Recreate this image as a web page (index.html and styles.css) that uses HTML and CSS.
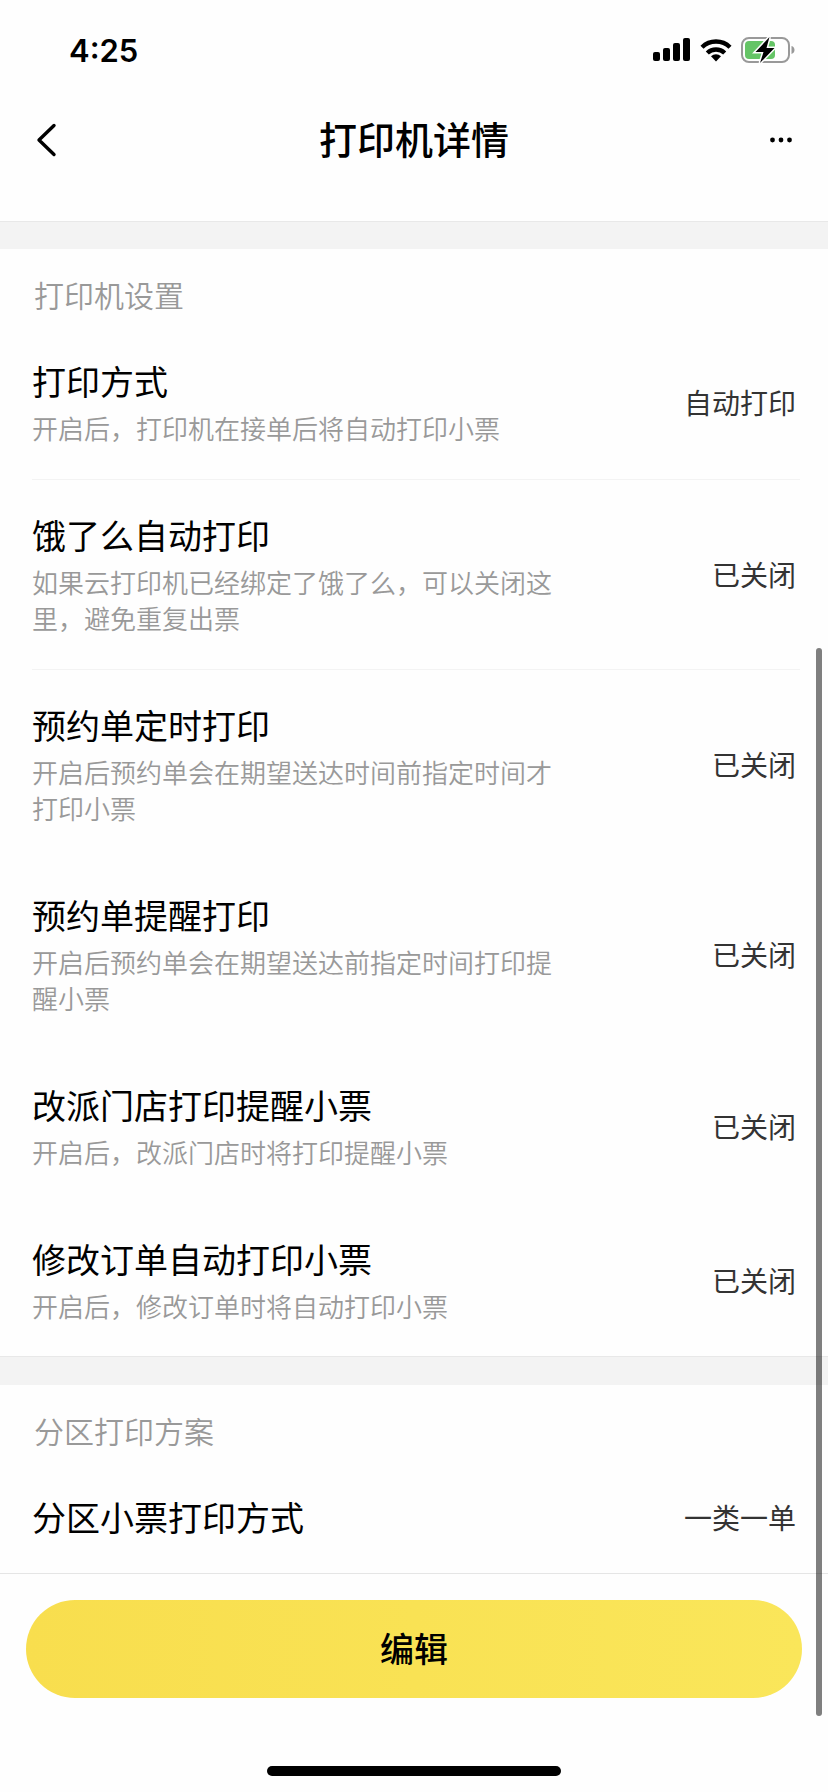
FILE: index.html
```html
<!DOCTYPE html>
<html lang="zh-CN">
<head>
  <meta charset="UTF-8">
  <meta name="viewport" content="width=device-width, initial-scale=1.0">
  <title>打印机详情</title>
  <link rel="stylesheet" href="styles.css">
</head>
<body>
  <div class="page">
    <div class="status-bar">
      <span class="time">4:25</span>
      <div class="status-icons">
        <svg width="38" height="24" viewBox="0 0 38 24" aria-hidden="true">
          <rect x="0" y="14" width="7" height="9" rx="2"/>
          <rect x="10" y="10" width="7" height="13" rx="2"/>
          <rect x="20" y="5" width="7" height="18" rx="2"/>
          <rect x="30" y="0" width="7" height="23" rx="2"/>
        </svg>
        <svg width="32" height="24" viewBox="0 0 32 24" aria-hidden="true">
          <g fill="none" stroke="#000" stroke-width="4.4">
            <path d="M2 9.2a20 20 0 0 1 28 0"/>
            <path d="M7.3 15a12.5 12.5 0 0 1 17.4 0"/>
          </g>
          <path d="M16 23.4l-5-5.2a7.2 7.2 0 0 1 10 0z"/>
        </svg>
        <svg width="54" height="28" viewBox="0 0 54 28" aria-hidden="true">
          <rect x="1" y="2" width="47" height="24" rx="7" fill="none" stroke="#999" stroke-width="2"/>
          <path d="M50.5 10v8c2-.6 3-2.2 3-4s-1-3.4-3-4z" fill="#999"/>
          <rect x="4" y="5" width="30" height="18" rx="4" fill="#65c466"/>
          <path d="M28.5 1L14.5 16h8l-3.5 11L33.500 12h-8z" stroke="#fefefe" stroke-width="3" paint-order="stroke"/>
        </svg>
      </div>
    </div>

    <header class="nav">
      <button class="nav-btn" aria-label="返回">
        <svg width="22" height="34" viewBox="0 0 22 34" aria-hidden="true">
          <path d="M18 2.5L3 17l15 14.5" fill="none" stroke="#000" stroke-width="3.4" stroke-linecap="round" stroke-linejoin="round"/>
        </svg>
      </button>
      <h1>打印机详情</h1>
      <button class="nav-btn more" aria-label="更多">
        <svg width="22" height="6" viewBox="0 0 22 6" aria-hidden="true">
          <circle cx="2.5" cy="3" r="2.4"/>
          <circle cx="11" cy="3" r="2.4"/>
          <circle cx="19.5" cy="3" r="2.4"/>
        </svg>
      </button>
    </header>

    <main>
      <section class="group">
        <h2>打印机设置</h2>
        <div class="row line">
          <div class="info">
            <h3>打印方式</h3>
            <p>开启后，打印机在接单后将自动打印小票</p>
          </div>
          <span class="value">自动打印</span>
        </div>
        <div class="row line">
          <div class="info">
            <h3>饿了么自动打印</h3>
            <p>如果云打印机已经绑定了饿了么，可以关闭这里，避免重复出票</p>
          </div>
          <span class="value">已关闭</span>
        </div>
        <div class="row">
          <div class="info">
            <h3>预约单定时打印</h3>
            <p>开启后预约单会在期望送达时间前指定时间才打印小票</p>
          </div>
          <span class="value">已关闭</span>
        </div>
        <div class="row">
          <div class="info">
            <h3>预约单提醒打印</h3>
            <p>开启后预约单会在期望送达前指定时间打印提醒小票</p>
          </div>
          <span class="value">已关闭</span>
        </div>
        <div class="row">
          <div class="info">
            <h3>改派门店打印提醒小票</h3>
            <p>开启后，改派门店时将打印提醒小票</p>
          </div>
          <span class="value">已关闭</span>
        </div>
        <div class="row">
          <div class="info">
            <h3>修改订单自动打印小票</h3>
            <p>开启后，修改订单时将自动打印小票</p>
          </div>
          <span class="value">已关闭</span>
        </div>
      </section>

      <section class="group">
        <h2>分区打印方案</h2>
        <div class="row">
          <div class="info">
            <h3>分区小票打印方式</h3>
          </div>
          <span class="value">一类一单</span>
        </div>
      </section>
    </main>

    <footer class="footer">
      <button class="edit-btn">编辑</button>
      <div class="home-bar"></div>
    </footer>

    <div class="scrollbar"></div>
  </div>
</body>
</html>
```
FILE: styles.css
```css
* {
  margin: 0;
  padding: 0;
  box-sizing: border-box;
}

body {
  font-family: "Noto Sans CJK SC", sans-serif;
  background-color: #fefefe;
  color: #000;
}

button {
  font-family: inherit;
  border: none;
  background: none;
  cursor: pointer;
}

svg {
  display: block;
}

.page {
  position: relative;
  min-height: 100vh;
  display: flex;
  flex-direction: column;
}

/* status bar */
.status-bar {
  display: flex;
  justify-content: space-between;
  align-items: center;
  height: 100px;
  padding: 0 33px 0 69px;
}

.time {
  font-family: Inter, sans-serif;
  font-size: 31px;
  font-weight: 600;
}

.status-icons {
  display: flex;
  align-items: center;
  gap: 9px;
}

/* title bar */
.nav {
  display: flex;
  justify-content: space-between;
  align-items: center;
  height: 80px;
  margin-bottom: 42px;
  padding: 0 36px;
}

.nav-btn {
  display: flex;
  align-items: center;
  width: 60px;
  height: 60px;
}

.more {
  justify-content: flex-end;
}

.nav h1 {
  padding-bottom: 6px;
  font-size: 38px;
  font-weight: 500;
}

/* settings list */
main {
  flex: 1;
}

.group {
  border-top: 27px solid #f3f3f3;
  box-shadow: 0 -1px 0 #e8e8e8;
}

.group + .group {
  border-top-width: 28px;
}

.group h2 {
  padding: 25px 34px 11px;
  font-size: 30px;
  line-height: 40px;
  font-weight: 350;
  color: #999;
}

.row {
  display: flex;
  justify-content: space-between;
  align-items: center;
  margin: 0 28px 0 32px;
  padding: 32px 4px 32px 0;
}

.line {
  box-shadow: 0 1px 0 #f3f3f3;
}

.info {
  max-width: 70%;
}

.info h3 {
  font-size: 34px;
  line-height: 48px;
  font-weight: 400;
}

.info p {
  padding: 5px 0 1px;
  font-size: 26px;
  line-height: 36px;
  font-weight: 350;
  color: #999;
}

.value {
  font-size: 28px;
  line-height: 40px;
  color: #333;
}

/* bottom button */
.footer {
  display: flex;
  flex-direction: column;
  align-items: center;
  padding: 26px 26px 16px;
  border-top: 1px solid #e5e5e5;
}

.edit-btn {
  width: 100%;
  height: 98px;
  padding-bottom: 4px;
  border-radius: 49px;
  background: linear-gradient(90deg, #f8de4e, #fae65a);
  font-size: 34px;
  font-weight: 500;
}

.home-bar {
  width: 38%;
  height: 10px;
  margin-top: 68px;
  border-radius: 5px;
  background: #000;
}

.scrollbar {
  position: absolute;
  right: 6px;
  top: 648px;
  bottom: 76px;
  width: 6px;
  border-radius: 3px;
  background: rgba(0, 0, 0, 0.5);
}
```
